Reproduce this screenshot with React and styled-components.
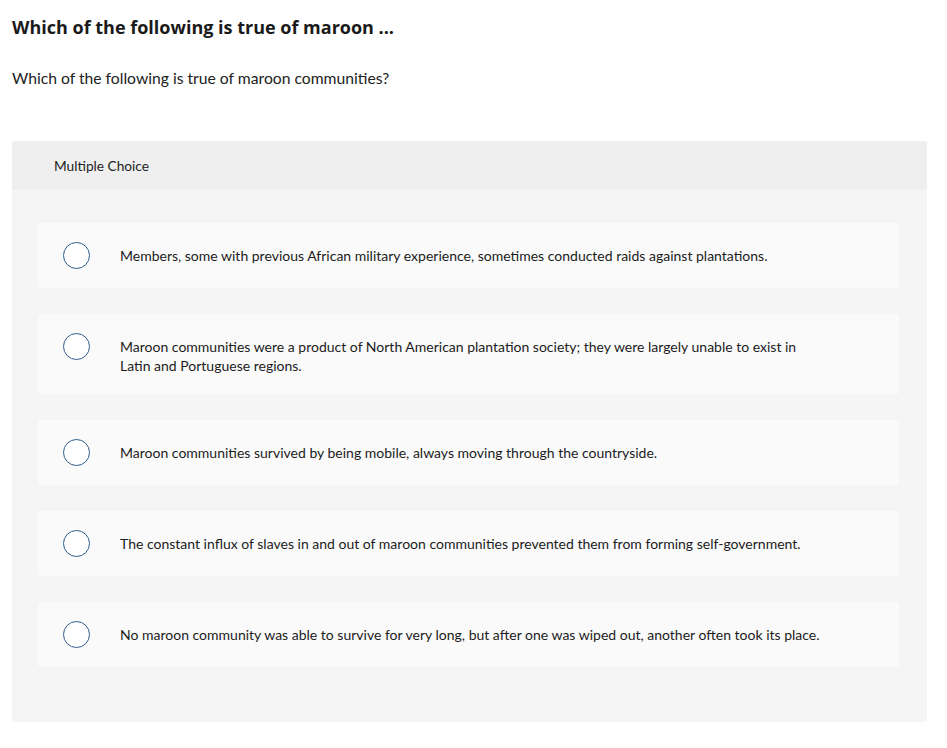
import React from 'react';
import styled, { createGlobalStyle } from 'styled-components';

const GlobalStyle = createGlobalStyle`
  body {
    margin: 0;
    background: #ffffff;
    font-family: Lato, "Open Sans", Arial, sans-serif;
    color: #1c1c1c;
  }
`;

const choices = [
  'Members, some with previous African military experience, sometimes conducted raids against plantations.',
  'Maroon communities were a product of North American plantation society; they were largely unable to exist in Latin and Portuguese regions.',
  'Maroon communities survived by being mobile, always moving through the countryside.',
  'The constant influx of slaves in and out of maroon communities prevented them from forming self-government.',
  'No maroon community was able to survive for very long, but after one was wiped out, another often took its place.',
];

const App = () => {
  return (
    <>
      <GlobalStyle />
      <Page>
        <Title>Which of the following is true of maroon ...</Title>
        <Prompt>Which of the following is true of maroon communities?</Prompt>
        <Panel>
          <PanelHeader>Multiple Choice</PanelHeader>
          <ChoiceList>
            {choices.map((text) => (
              <Choice key={text}>
                <Radio />
                <ChoiceText>{text}</ChoiceText>
              </Choice>
            ))}
          </ChoiceList>
        </Panel>
      </Page>
    </>
  );
};

const Page = styled.div`
  padding: 14px 20px 26px 12px;
`;

const Title = styled.h1`
  margin: 0;
  font-family: "Open Sans", Arial, sans-serif;
  font-size: 18px;
  font-weight: 700;
  line-height: 26px;
  color: #1a1a1a;
`;

const Prompt = styled.p`
  margin: 27px 0 0 0;
  font-size: 15.7px;
  line-height: 22px;
  color: #222;
`;

const Panel = styled.div`
  margin-top: 52px;
  background: #f5f5f5;
  border-radius: 3px;
  overflow: hidden;
`;

const PanelHeader = styled.div`
  height: 49px;
  display: flex;
  align-items: center;
  padding-left: 42px;
  background: #efefef;
  font-size: 13.7px;
  color: #222;
`;

const ChoiceList = styled.div`
  display: flex;
  flex-direction: column;
  gap: 26px;
  padding: 33px 28px 55px 26px;
`;

const Choice = styled.div`
  display: flex;
  align-items: flex-start;
  padding: 19px 79px 19px 25px;
  background: #fafafa;
  border-radius: 2px;
`;

const Radio = styled.span`
  flex: none;
  width: 25px;
  height: 25px;
  border: 1.5px solid #2e5c8a;
  border-radius: 50%;
  background: #fff;
`;

const ChoiceText = styled.div`
  margin-left: 30px;
  padding-top: 4px;
  font-size: 14px;
  line-height: 19px;
  color: #1c1c1c;
`;

export default App;
